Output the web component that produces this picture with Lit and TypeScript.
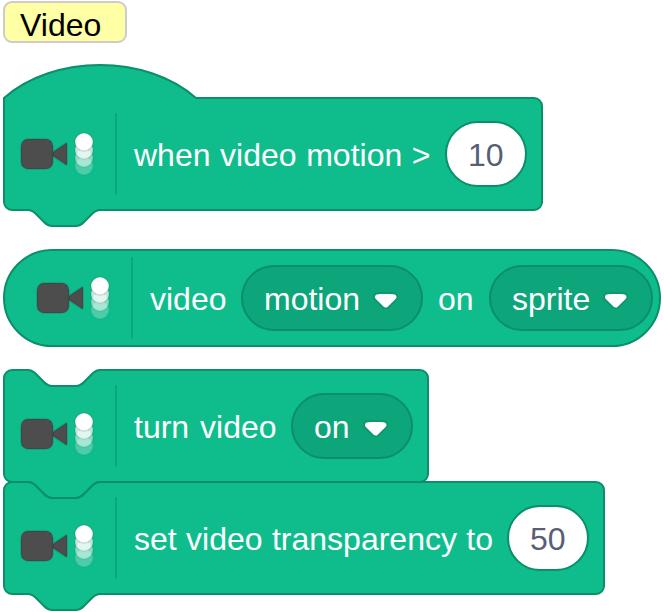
import { LitElement, html, css, svg } from "lit";
import { customElement, property } from "lit/decorators.js";

interface Part {
  kind: "label" | "menu" | "number";
  text: string;
  width: number;
  spacing: number;
}

const label = (text: string, width: number, spacing = 0): Part => ({ kind: "label", text, width, spacing });
const menu = (text: string, width: number): Part => ({ kind: "menu", text, width, spacing: 0 });
const num = (text: string): Part => ({ kind: "number", text, width: 36, spacing: 0 });

// Outlines are in workspace units; one unit is two pixels.
const BOTTOM =
  "H 48 c -2,0 -3,1 -4,2 l -4,4 c -1,1 -2,2 -4,2 h -12 c -2,0 -3,-1 -4,-2 l -4,-4 c -1,-1 -2,-2 -4,-2 H 4 a 4,4 0 0,1 -4,-4 z";
const NOTCH =
  "c 2,0 3,1 4,2 l 4,4 c 1,1 2,2 4,2 h 12 c 2,0 3,-1 4,-2 l 4,-4 c 1,-1 2,-2 4,-2";

function outline(shape: string, w: number): string {
  const right = `H ${w - 4} a 4,4 0 0,1 4,4 v 48 a 4,4 0 0,1 -4,4`;
  if (shape === "hat") return `M 0,0 c 25,-22 71,-22 96,0 ${right} ${BOTTOM}`;
  if (shape === "stack") return `M 0,4 A 4,4 0 0,1 4,0 H 12 ${NOTCH} ${right} ${BOTTOM}`;
  return `M 24,0 H ${w - 24} a 24,24 0 0,1 0,48 H 24 a 24,24 0 0,1 0,-48 z`;
}

@customElement("video-icon")
class VideoIcon extends LitElement {
  static styles = css`
    :host { display: block; width: 80px; height: 80px; }
    .icon { display: block; width: 80px; height: 80px; }
  `;
  render() {
    const dots = [[26, 0.25], [22, 0.5], [18, 0.75], [14, 1]];
    return html`<svg class="icon" viewBox="0 0 40 40">
      ${dots.map(
        ([cy, o]) => svg`<g opacity=${o}>
          <circle cx="32" cy=${cy} r="4.5" fill="#fff" />
          <circle cx="32" cy=${cy} r="4.5" fill="none" stroke="#000" stroke-opacity="0.1" />
        </g>`
      )}
      <g fill="#4d4d4d" stroke="#000" stroke-opacity="0.1" stroke-linejoin="round">
        <path d="M22.8,14.7 L17,18.6 a1,1 0 0 0 -.5,.8 v1.2 a1,1 0 0 0 .5,.8 L22.8,25.3 a.4,.4 0 0 0 .7,-.3 V15 a.4,.4 0 0 0 -.7,-.3 z" />
        <rect x="0.5" y="12.5" width="16" height="15" rx="3.6" />
      </g>
    </svg>`;
  }
}

@customElement("menu-arrow")
class MenuArrow extends LitElement {
  static styles = css`
    :host { display: block; }
    .arrow { display: block; width: 25.42px; height: 17.58px; }
  `;
  render() {
    return html`<svg class="arrow" viewBox="0 0 12.71 8.79">
      <path fill="#231f20" opacity="0.1" d="M12.71,2.44A2.41,2.41,0,0,1,12,4.16L8.08,8.08a2.45,2.45,0,0,1-3.45,0L0.72,4.16A2.42,2.42,0,0,1,0,2.44,2.48,2.48,0,0,1,.71.71C1,0.47,1.43,0,6.36,0S11.75,0.46,12,.71A2.44,2.44,0,0,1,12.71,2.44Z" />
      <path fill="#fff" d="M6.36,7.79a1.43,1.43,0,0,1-1-.42L1.42,3.45a1.44,1.44,0,0,1,0-2c0.56-.56,9.31-0.56,9.87,0a1.44,1.44,0,0,1,0,2L7.37,7.37A1.43,1.43,0,0,1,6.36,7.79Z" />
    </svg>`;
  }
}

@customElement("code-block")
class CodeBlock extends LitElement {
  @property() shape = "stack";
  @property({ type: Number }) width = 200;
  @property({ attribute: false }) parts: Part[] = [];

  static styles = css`
    :host { display: block; }
    .block {
      position: relative;
      box-sizing: border-box;
      height: 112px;
      display: flex;
      align-items: center;
      padding-left: 16px;
      color: #fff;
      font: 32px/36px "Liberation Sans", Arial, sans-serif;
      white-space: pre;
    }
    .reporter { height: 96px; padding-left: 32px; }
    .shape { position: absolute; left: 0; top: 0; width: 100%; height: 100%; overflow: visible; }
    .shape path { fill: #0fbd8c; stroke: #0b8e69; stroke-width: 1; }
    .icon, .rule, .label, .menu, .number { position: relative; flex: none; }
    .stack .icon { top: 8px; }
    .rule { width: 2px; height: 82px; margin: 0 17px 0 15px; border-radius: 1px; background: #0da57a; }
    .label { padding-top: 2px; }
    .menu, .number {
      box-sizing: border-box;
      height: 66px;
      margin: 0 15px;
      border: 2px solid #0b8e69;
      border-radius: 33px;
      display: flex;
      align-items: center;
    }
    .menu { background: #0da57a; padding: 0 22.3px 0 21px; gap: 13.3px; }
    .text { flex: none; padding-top: 2px; }
    .menu menu-arrow { flex: none; padding-top: 5px; }
    .number { width: 82px; justify-content: center; background: #fff; color: #575e75; }
  `;

  private part(p: Part) {
    if (p.kind === "label")
      return html`<span class="label" style="width:${p.width}px;word-spacing:${p.spacing}px">${p.text}</span>`;
    const text = html`<span class="text" style="width:${p.width}px">${p.text}</span>`;
    return p.kind === "menu"
      ? html`<span class="menu">${text}<menu-arrow></menu-arrow></span>`
      : html`<span class="number">${text}</span>`;
  }

  render() {
    return html`<div class="block ${this.shape}" style="width:${this.width * 2}px">
      <svg class="shape"><path transform="scale(2)" d=${outline(this.shape, this.width)} /></svg>
      <video-icon class="icon"></video-icon>
      <span class="rule"></span>
      ${this.parts.map((p) => this.part(p))}
    </div>`;
  }
}

@customElement("app-root")
class AppRoot extends LitElement {
  static styles = css`
    :host { display: block; width: 664px; height: 612px; overflow: hidden; background: #fff; }
    .workspace { padding: 1px 0 0 4px; }
    .category {
      box-sizing: border-box;
      width: 124px;
      height: 42px;
      margin-left: -1px;
      padding: 4px 0 0 15px;
      border: 2px solid #ccc;
      border-radius: 9px;
      background: #ffffa5;
      color: #000;
      font: 32px/36px "Liberation Sans", Arial, sans-serif;
    }
    .event { margin-top: 55px; }
    .value { margin-top: 40px; }
    .script { margin-top: 24px; }
  `;
  render() {
    return html`<main class="workspace">
      <div class="category">Video</div>
      <code-block class="event" shape="hat" width="269" .parts=${[label("when video motion >", 296, 0.7), num("10")]}></code-block>
      <code-block class="value" shape="reporter" width="328" .parts=${[label("video", 76), menu("motion", 96), label("on", 36), menu("sprite", 78)]}></code-block>
      <section class="script">
        <code-block width="212" .parts=${[label("turn video", 142, 2), menu("on", 36)]}></code-block>
        <code-block width="300" .parts=${[label("set video transparency to", 358, 0.5), num("50")]}></code-block>
      </section>
    </main>`;
  }
}
